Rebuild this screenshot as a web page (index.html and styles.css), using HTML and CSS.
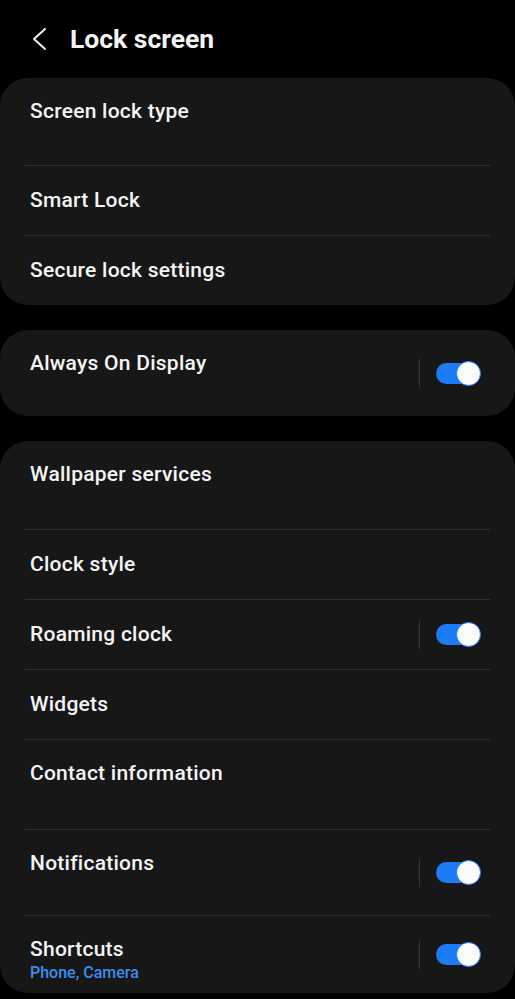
FILE: index.html
```html
<!DOCTYPE html>
<html lang="en">
<head>
  <meta charset="UTF-8">
  <meta name="viewport" content="width=device-width, initial-scale=1.0">
  <title>Lock screen</title>
  <link rel="stylesheet" href="styles.css">
</head>
<body>
  <!-- top bar -->
  <div class="app-bar">
    <span class="back">
      <svg width="16" height="24" viewBox="0 0 16 24">
        <polyline points="14,2 3,12 14,22" fill="none" stroke="#f2f2f2" stroke-width="2" stroke-linecap="round" stroke-linejoin="round"/>
      </svg>
    </span>
    <h1>Lock screen</h1>
  </div>

  <div class="card">
    <div class="row two h87">
      <div class="text">
        <div class="title">Screen lock type</div>
        <div class="sub blank"></div>
      </div>
    </div>
    <div class="row"><div class="title">Smart Lock</div></div>
    <div class="row"><div class="title">Secure lock settings</div></div>
  </div>

  <div class="card">
    <div class="row two h86">
      <div class="text">
        <div class="title">Always On Display</div>
        <div class="sub blank"></div>
      </div>
      <span class="sep"></span>
      <span class="switch"><span class="thumb"></span></span>
    </div>
  </div>

  <div class="card">
    <div class="row two h88">
      <div class="text">
        <div class="title">Wallpaper services</div>
        <div class="sub blank"></div>
      </div>
    </div>
    <div class="row"><div class="title">Clock style</div></div>
    <div class="row">
      <div class="title">Roaming clock</div>
      <span class="sep"></span>
      <span class="switch"><span class="thumb"></span></span>
    </div>
    <div class="row"><div class="title">Widgets</div></div>
    <div class="row two h90">
      <div class="text">
        <div class="title">Contact information</div>
        <div class="sub blank"></div>
      </div>
    </div>
    <div class="row two h86">
      <div class="text">
        <div class="title">Notifications</div>
        <div class="sub blank"></div>
      </div>
      <span class="sep"></span>
      <span class="switch"><span class="thumb"></span></span>
    </div>
    <div class="row two h78">
      <div class="text">
        <div class="title">Shortcuts</div>
        <div class="sub">Phone, Camera</div>
      </div>
      <span class="sep"></span>
      <span class="switch"><span class="thumb"></span></span>
    </div>
  </div>
</body>
</html>
```

FILE: styles.css
```css
* {
  box-sizing: border-box;
}
body {
  margin: 0;
  background: #000;
  color: #f4f4f4;
  font-family: Roboto, "Noto Sans", sans-serif;
}
.app-bar {
  display: flex;
  align-items: center;
  height: 78px;
  padding-left: 31px;
}
.back {
  display: flex;
  width: 39px;
}
.app-bar h1 {
  margin: 0;
  font-size: 26.5px;
  font-weight: 700;
  line-height: 32px;
}
.card {
  background: #171717;
  border-radius: 28px;
  padding: 0 25px;
  margin-bottom: 25px;
}
.row {
  display: flex;
  align-items: center;
  height: 70px;
  padding: 0 9px 0 5px;
  border-top: 1px solid #303030;
}
.row:first-child {
  border-top: none;
}
.row.two {
  align-items: flex-start;
  padding-top: 20px;
}
.row.two .sep,
.row.two .switch {
  align-self: center;
  margin-top: -20px;
}
.h78 { height: 78px; }
.h86 { height: 86px; }
.h87 { height: 87px; }
.h88 { height: 88px; }
.h90 { height: 90px; }
.text {
  flex: 1;
}
.title {
  flex: 1;
  font-size: 21px;
  font-weight: 500;
  line-height: 26px;
  letter-spacing: 0.25px;
}
.row:not(.two) .title {
  margin-top: -1px;
}
.sub {
  font-size: 16px;
  font-weight: 500;
  line-height: 22px;
  color: #3d8ef0;
}
.sub.blank {
  height: 22px;
}
.sep {
  width: 1px;
  height: 28px;
  background: #383838;
  margin-right: 16px;
}
.switch {
  position: relative;
  display: inline-block;
  width: 45px;
  height: 25px;
}
.switch::before {
  content: "";
  position: absolute;
  left: 0;
  top: 2px;
  width: 42px;
  height: 21px;
  border-radius: 11px;
  background: #1c7cf5;
}
.thumb {
  position: absolute;
  right: 0;
  top: 0;
  width: 25px;
  height: 25px;
  border-radius: 50%;
  background: #fbfbfb;
  border: 1.5px solid #1c7cf5;
}
```
